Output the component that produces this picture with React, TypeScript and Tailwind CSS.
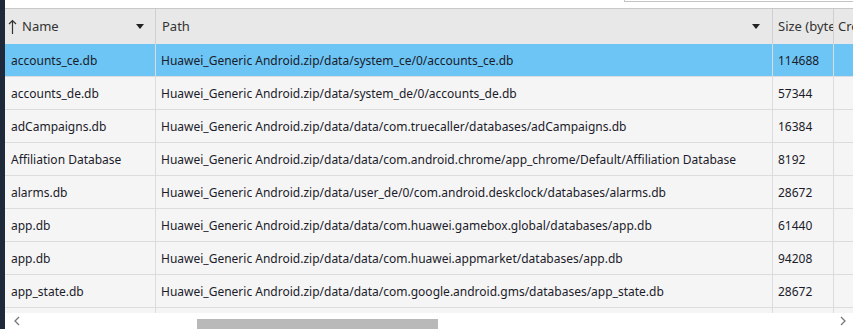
import React from 'react';

const rows = [
  { name: 'accounts_ce.db', path: 'Huawei_Generic Android.zip/data/system_ce/0/accounts_ce.db', size: '114688' },
  { name: 'accounts_de.db', path: 'Huawei_Generic Android.zip/data/system_de/0/accounts_de.db', size: '57344' },
  { name: 'adCampaigns.db', path: 'Huawei_Generic Android.zip/data/data/com.truecaller/databases/adCampaigns.db', size: '16384' },
  { name: 'Affiliation Database', path: 'Huawei_Generic Android.zip/data/data/com.android.chrome/app_chrome/Default/Affiliation Database', size: '8192' },
  { name: 'alarms.db', path: 'Huawei_Generic Android.zip/data/user_de/0/com.android.deskclock/databases/alarms.db', size: '28672' },
  { name: 'app.db', path: 'Huawei_Generic Android.zip/data/data/com.huawei.gamebox.global/databases/app.db', size: '61440' },
  { name: 'app.db', path: 'Huawei_Generic Android.zip/data/data/com.huawei.appmarket/databases/app.db', size: '94208' },
  { name: 'app_state.db', path: 'Huawei_Generic Android.zip/data/data/com.google.android.gms/databases/app_state.db', size: '28672' },
  { name: '', path: '', size: '' },
];

const Caret = () => (
  <svg width="8" height="5" viewBox="0 0 8 5" className="shrink-0">
    <path d="M0 0h8L4 5z" fill="#222" />
  </svg>
);

const SortUp = () => (
  <svg width="9" height="15" viewBox="0 0 9 15" className="shrink-0 mr-[5px]">
    <path d="M4.5 1.5V15M1 5l3.5-3.5L8 5" stroke="#333" strokeWidth="1.2" fill="none" />
  </svg>
);

const App = () => {
  return (
    <div className="w-[853px] h-[329px] flex bg-white overflow-hidden text-[12px] text-[#1b1b2a]" style={{ fontFamily: '"Noto Sans", "Open Sans", sans-serif' }}>
      <div className="w-[5px] shrink-0 bg-[#1e2a3a]" />
      <div className="flex-1 flex flex-col min-w-0">
        {/* top strip with search box edge */}
        <div className="h-[8px] flex justify-end">
          <div className="w-[229px] h-[2px] border-l border-b border-[#c4c4c4]" />
        </div>

        {/* header */}
        <div className="h-[36px] flex bg-[#e8e8e8] border-t border-[#c8c8c8] text-[#333] text-[13px]">
          <div className="w-[151px] shrink-0 flex items-center pl-[3px] pr-[11px] border-r border-[#cfcfcf]">
            <SortUp />
            <span className="flex-1">Name</span>
            <Caret />
          </div>
          <div className="w-[617px] shrink-0 flex items-center pl-[6px] pr-[12px] border-r border-[#cfcfcf]">
            <span className="flex-1">Path</span>
            <Caret />
          </div>
          <div className="w-[61px] shrink-0 flex items-center pl-[5px] border-r border-[#cfcfcf] whitespace-nowrap overflow-hidden">
            <span>Size (bytes)</span>
          </div>
          <div className="flex-1 min-w-0 flex items-center pl-[4px] whitespace-nowrap overflow-hidden">
            <span>Created</span>
          </div>
        </div>

        {/* rows */}
        <div className="flex-1 overflow-hidden">
          {rows.map((r, i) => (
            <div
              key={i}
              className={`h-[33px] flex border-b border-[#dcdcdc] whitespace-nowrap ${i === 0 ? 'bg-[#6cc5f5]' : 'bg-[#f5f5f5]'}`}
            >
              <div className="w-[151px] shrink-0 flex items-center pl-[6px] pt-[2px] border-r border-[#dcdcdc] overflow-hidden">{r.name}</div>
              <div className="w-[617px] shrink-0 flex items-center pl-[5px] pt-[2px] border-r border-[#dcdcdc] overflow-hidden">{r.path}</div>
              <div className="w-[61px] shrink-0 flex items-center pl-[5px] pt-[2px] border-r border-[#dcdcdc] overflow-hidden">{r.size}</div>
              <div className="flex-1" />
            </div>
          ))}
        </div>

        {/* horizontal scrollbar */}
        <div className="h-[16px] shrink-0 flex items-center bg-white">
          <svg width="8" height="10" viewBox="0 0 8 10" className="ml-[8px]">
            <path d="M6 1L2 5l4 4" stroke="#777" strokeWidth="1.3" fill="none" />
          </svg>
          <div className="ml-[176px] mt-[6px] w-[241px] h-[10px] bg-[#b9b9b9]" />
          <div className="flex-1" />
          <svg width="8" height="10" viewBox="0 0 8 10" className="mr-[6px]">
            <path d="M2 1l4 4-4 4" stroke="#777" strokeWidth="1.3" fill="none" />
          </svg>
        </div>
      </div>
    </div>
  );
};

export default App;
